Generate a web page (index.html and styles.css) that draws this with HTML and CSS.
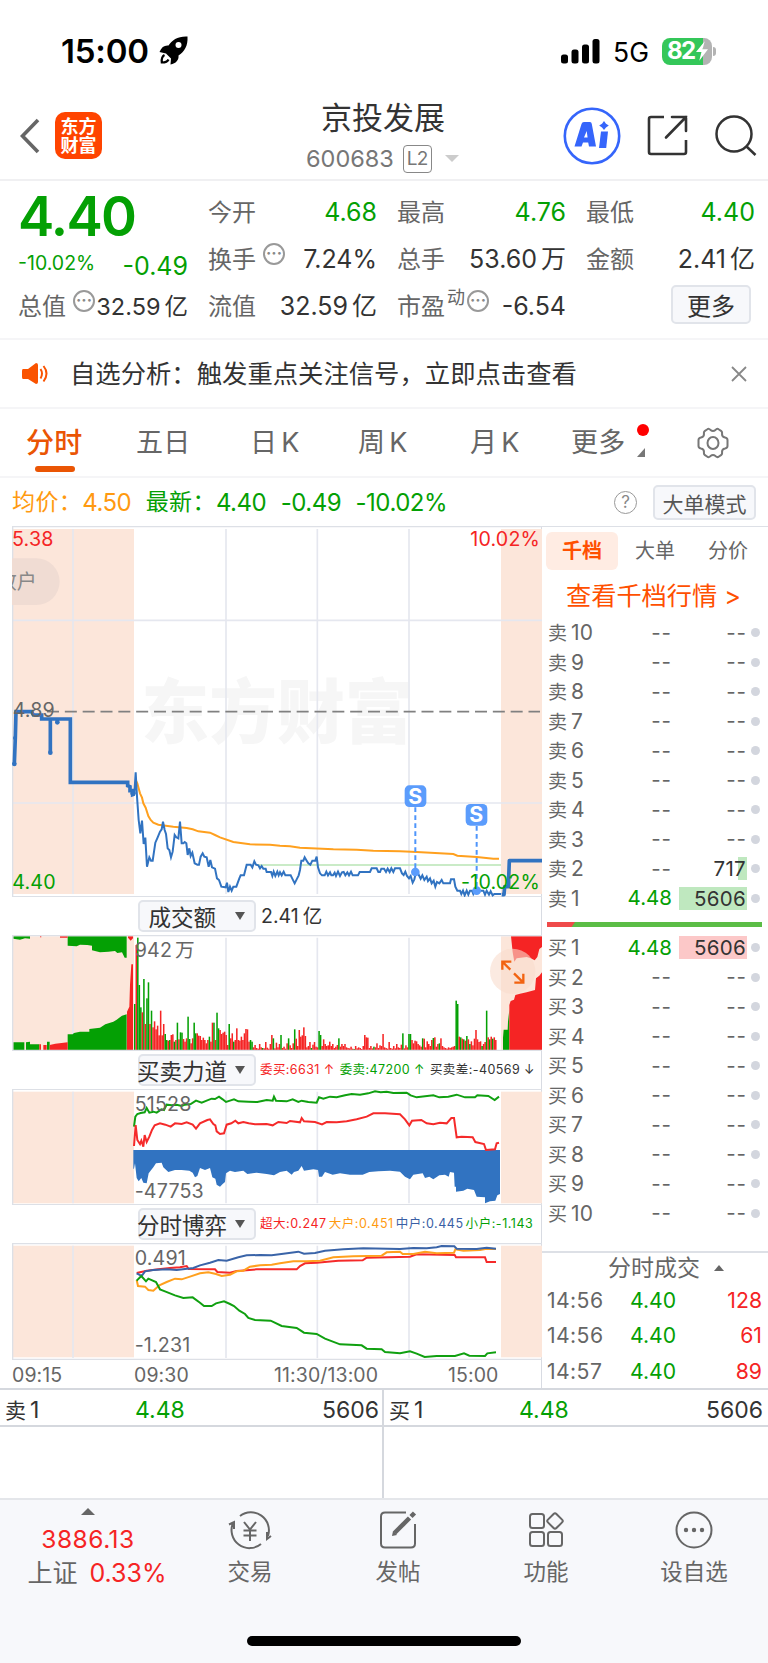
FILE: index.html
```html
<!DOCTYPE html>
<html lang="zh-CN">
<head>
    <meta charset="UTF-8">
    <meta name="viewport" content="width=device-width, initial-scale=1.0">
    <title>京投发展 600683</title>
    <link rel="stylesheet" href="styles.css">
</head>
<body>

    <!-- 状态栏 -->
    <div class="status-bar">
        <div class="status-time">15:00</div>
        <svg class="rocket" width="29" height="29" viewBox="0 0 29 29">
            <path d="M28.500 0.500C19 0 13 4 9.500 9.500C5.500 9 2.500 11 0.500 16L7 17.500L12 22.500L11.500 28.500C17 27.500 20 24 19.500 19.500C25.500 15.500 29 10 28.500 0.500Z"/>
            <circle cx="19.500" cy="9" r="3" fill="#fff"/>
            <path d="M5.500 19C2.500 20.500 2.500 23.500 2.800 26.500C6 26.500 8.500 26 9.500 23.500" fill="none" stroke="#000" stroke-width="2.200"/>
        </svg>
        <div class="status-right">
            <svg width="39" height="25" viewBox="0 0 39 25">
                <rect x="0" y="15.500" width="7" height="9" rx="2.500"/>
                <rect x="10.500" y="10.500" width="7" height="14" rx="2.500"/>
                <rect x="21" y="5.500" width="7" height="19" rx="2.500"/>
                <rect x="31.500" y="0" width="7" height="24.500" rx="2.500"/>
            </svg>
            <span class="network">5G</span>
            <div class="battery">
                <span>82</span>
                <svg width="12" height="20" viewBox="0 0 11 18"><path d="M8 0L0 10H5L3 18L11 7.500H6Z" fill="#fff"/></svg>
            </div>
            <i class="battery-tip"></i>
        </div>
    </div>

    <!-- 标题栏 -->
    <header class="header">
        <svg class="back" width="20" height="36" viewBox="0 0 20 36"><path d="M18 2L2.500 18L18 34" fill="none" stroke="#666" stroke-width="3.600"/></svg>
        <div class="logo">东方<br>财富</div>
        <div class="title">
            <h1>京投发展</h1>
            <div class="code">600683<span class="l2">L2</span><i class="arrow-down"></i></div>
        </div>
        <div class="header-icons">
            <svg width="58" height="58" viewBox="0 0 58 58">
                <circle cx="29" cy="29" r="27.200" fill="none" stroke="#3565fb" stroke-width="2.600"/>
                <path d="M11.500 39.500L18.500 17Q19 15 21 15H27Q28.500 15 28.800 17L33 39.500H26L25.200 35.500H20L18.500 39.500ZM21 30.500H24.600L23.700 24Z" fill="#3565fb" fill-rule="evenodd"/>
                <path d="M38 24.500H45L43.200 41H36Z" fill="#3565fb"/>
                <path d="M41 14L43 16.800L45.800 18.500L43 20.400L41 23L39 20.400L36.200 18.500L39 16.800Z" fill="#3565fb"/>
            </svg>
            <svg class="share" width="41" height="41" viewBox="0 0 41 41" fill="none" stroke="#333" stroke-width="2.600">
                <path d="M17 2H4Q2 2 2 4V37Q2 39 4 39H37Q39 39 39 37V25"/>
                <path d="M25 2H39V16M39 2L19 22.500" stroke-linecap="round"/>
            </svg>
            <svg class="search" width="42" height="42" viewBox="0 0 42 42" fill="none" stroke="#333" stroke-width="2.500">
                <circle cx="19" cy="19" r="17.500"/><path d="M31 31L40.500 40"/>
            </svg>
        </div>
    </header>

    <!-- 行情 -->
    <section class="quote">
        <div class="price">4.40</div>
        <div class="cell"><span>今开</span><b class="green">4.68</b></div>
        <div class="cell"><span>最高</span><b class="green">4.76</b></div>
        <div class="cell"><span>最低</span><b class="green">4.40</b></div>

        <div class="cell change"><b class="green small">-10.02%</b><b class="green">-0.49</b></div>
        <div class="cell"><span>换手<i class="tip">···</i></span><b>7.24%</b></div>
        <div class="cell"><span>总手</span><b>53.60<em>万</em></b></div>
        <div class="cell"><span>金额</span><b>2.41<em>亿</em></b></div>

        <div class="cell total"><span>总值<i class="tip">···</i></span><b>32.59<em>亿</em></b></div>
        <div class="cell"><span>流值</span><b>32.59<em>亿</em></b></div>
        <div class="cell"><span>市盈<sup>动</sup><i class="tip near">···</i></span><b>-6.54</b></div>
        <div class="cell"><button class="more-btn">更多</button></div>
    </section>

    <!-- 提示 -->
    <div class="notice">
        <svg width="27" height="24" viewBox="0 0 27 24">
            <path d="M1 7H6L14 1Q16 1 16 3V20Q16 22 14 22L6 17H1Q0 17 0 15V9Q0 7 1 7Z" fill="#fa5300"/>
            <path d="M18.500 7Q21.500 11.500 18.500 16.500M21.500 4Q27.500 11.500 21.500 19.500" fill="none" stroke="#fa5300" stroke-width="2"/>
        </svg>
        <p>自选分析：触发重点关注信号，立即点击查看</p>
        <svg class="close" width="16" height="16" viewBox="0 0 16 16"><path d="M1 1L15 15M15 1L1 15" stroke="#888" stroke-width="1.800"/></svg>
    </div>

    <!-- 周期 -->
    <nav class="tabs">
        <a class="active">分时</a>
        <a>五日</a>
        <a>日<em>K</em></a>
        <a>周<em>K</em></a>
        <a>月<em>K</em></a>
        <a class="more">更多<i class="dot"></i><i class="corner"></i></a>
        <svg width="34" height="32" viewBox="0 0 34 32" fill="none" stroke="#777" stroke-width="2">
            <path d="M11 2.500Q13 1 14.500 3Q17 5 19.500 3Q21 1 23 2.500L25 3.800Q26.500 5 26 7Q26 10 29 10.500Q31.500 11 31.500 13V19Q31.500 21 29 21.500Q26 22 26 25Q26.500 27 25 28.200L23 29.500Q21 31 19.500 29Q17 27 14.500 29Q13 31 11 29.500L9 28.200Q7.500 27 8 25Q8 22 5 21.500Q2.500 21 2.500 19V13Q2.500 11 5 10.500Q8 10 8 7Q7.500 5 9 3.800Z"/>
            <ellipse cx="17" cy="16" rx="5.500" ry="6"/>
        </svg>
    </nav>

    <!-- 均价 -->
    <div class="avg-row">
        <span class="orange">均价：</span><b class="orange">4.50</b>
        <span class="green">最新：</span><b class="green">4.40</b><b class="green">-0.49</b><b class="green">-10.02%</b>
        <i class="help">?</i>
        <button class="mode-btn">大单模式</button>
    </div>

    <main class="main">
        <div class="charts">
            <!-- 价格 -->
            <svg class="chart price-chart" viewBox="36 18 1590 1113">
                <rect class="auction" x="37" y="27" width="365" height="1095"/>
                <rect class="auction" x="1503" y="27" width="123" height="1095"/>
                <text class="watermark" x="424" y="655" textLength="814" lengthAdjust="spacingAndGlyphs">东方财富</text>
                <path class="grid" d="M219 27V1122M678 27V1122M952 27V1122M1227 27V1122M37 301H1626M37 849H1626"/>
                <path class="frame" d="M36 20H1626M38 18V1131M36 1130H1626"/>
                <rect x="-60" y="115" width="239" height="140" rx="70" fill="#f0dcd3"/>
                <text class="pill-text" x="-10" y="207">散户</text>
                <path d="M141 575H1620" stroke="#808080" stroke-width="5" stroke-dasharray="36 17.500"/>
                <path d="M770 1035H1503" stroke="#b9e5b5" stroke-width="5"/>
                <path class="line" stroke="#ffa01e" d="M407 780L412 790L420 820L426 833L430 850L437 863L445 888L452 900L460 908L475 914L520 920L560 924L578 928L595 934L630 938L645 945L660 952L700 966L750 973L810 974L840 977L870 979L900 983L1000 988L1070 989L1120 992L1200 994L1250 996L1360 1002L1372 1007L1430 1011L1480 1016L1497 1016"/>
                <path class="line thick" d="M43 732L46 652L48 575H95L100 585H125V597H151V697V597H172V607V597H211V787H383V797L390 800V812L398 812V824L403 822"/>
                <g fill="#3173c1"><circle cx="43" cy="732" r="7"/><circle cx="45" cy="654" r="6"/><circle cx="151" cy="698" r="7"/><circle cx="172" cy="607" r="7"/><circle cx="399" cy="820" r="8"/></g>
                <path class="line" d="M403 822L407 757L411 830L416 900L421 940L426 902L431 972L436 953L441 1040L448 1012L453 1022H458L466 968L473 952L480 935L485 928L489 905L494 930L498 942L503 985L508 990L513 1012L518 995L524 945L529 952L535 955L540 905L545 970L550 970L554 966L559 970L563 1005L568 985L572 1008L577 998L584 1030L592 1034H597L602 1010L608 1000L613 1010L620 1012L626 1040L631 1020L636 1042L645 1046L651 1075L657 1080L664 1100L677 1102L681 1088L685 1116L690 1100L695 1112L700 1100L709 1100L718 1075L722 1066L732 1066L740 1034L752 1034L757 1042L763 1024L768 1034L775 1036L780 1045L785 1038L790 1046H797L800 1056H813L817 1068L821 1055L826 1068L832 1055L836 1066L840 1057L845 1066L851 1055L856 1066H872L878 1078L884 1090L890 1078L896 1066L900 1050L904 1022L910 1022L914 1012L920 1022L925 1030L931 1034L937 1022H946L950 1010L954 1042L960 1060L966 1066H974L979 1055L984 1066L990 1057L994 1066H999L1004 1058L1008 1068L1014 1055L1020 1068L1026 1057L1031 1056L1036 1066L1042 1057L1047 1066L1053 1055L1058 1066H1074L1079 1056H1110L1115 1045H1130L1135 1056H1140L1144 1046H1152L1158 1056L1163 1046L1169 1056L1174 1045L1180 1056L1185 1045H1200L1206 1060L1211 1065L1216 1055L1221 1068L1227 1075L1232 1068L1238 1088L1243 1078L1248 1057L1255 1062L1262 1076L1267 1066L1273 1080L1280 1070L1284 1083L1290 1075L1295 1090L1301 1082L1306 1100L1311 1086L1318 1090L1325 1080L1330 1090H1350L1353 1078H1362L1366 1100L1372 1112H1380L1384 1122L1389 1112L1394 1126L1400 1112L1405 1124L1410 1112H1416L1420 1122L1425 1112H1450L1455 1124L1460 1112L1467 1124L1472 1114L1478 1126L1483 1122H1503"/>
                <path class="line thick" stroke-linejoin="round" d="M1505 1124H1512L1514 1100H1526V1075L1528 1022H1626"/>
                <g stroke="#4e95fb" stroke-width="6" stroke-dasharray="14 10"><path d="M1246 862V1050M1430 918V1110"/></g>
                <g fill="#5b9cfc"><rect x="1214" y="796" width="65" height="65" rx="14"/><rect x="1397" y="852" width="65" height="65" rx="14"/><circle cx="1246" cy="1056" r="13"/><circle cx="1430" cy="1112" r="13"/></g>
                <text class="mark" x="1246" y="851">S</text>
                <text class="mark" x="1429" y="907">S</text>
                <text class="label up" x="36" y="77">5.38</text>
                <text class="label up end" x="1620" y="77">10.02%</text>
                <text class="label" x="38" y="592">4.89</text>
                <text class="label down" x="37" y="1108">4.40</text>
                <text class="label down end" x="1620" y="1108">-10.02%</text>
            </svg>

            <div class="toolbar">
                <button>成交额<i></i></button>
                <span class="amount">2.41<em>亿</em></span>
            </div>

            <!-- 成交额 -->
            <svg class="chart" viewBox="36 120 1590 348">
                <rect class="auction" x="37" y="124" width="365" height="342"/>
                <rect class="auction" x="1503" y="124" width="123" height="342"/>
                <path class="grid" d="M219 128V466M678 128V466M952 128V466M1227 128V466"/>
                <g fill="#04a004">
                    <path d="M40 466V442H73V466ZM78 466V442L90 440V448H118V466ZM141 466V440H149V466ZM203 466V418H218L222 414L240 410L268 410V402L300 398L316 388L340 380L350 374L366 362L380 358V466Z"/>
                    <path d="M40 124V131L60 134L75 130L90 131V124ZM203 124V152L230 154L240 149L262 150L276 152V166L300 172L325 170L345 168L352 174L366 172L374 188H380V124Z"/>
                    <path d="M1509 466V428L1511 404H1523L1524 380L1528 345V466Z"/>
                </g>
                <g fill="#f52424">
                    <path d="M118 466V448H123V466ZM130 466V450H140V466ZM149 466V450L166 446L203 442V466ZM381 466V350L388 335L390 270L394 208H399V466Z"/>
                    <path d="M120 124H124V127H120ZM180 124H203V128H180ZM384 124V128L392 137L399 130V124Z"/>
                    <path d="M1528 466V330L1532 318L1542 314L1546 300L1560 296L1580 292L1605 285L1608 250L1618 242L1626 232V466Z"/>
                    <path d="M1533 124H1626V156L1618 162L1612 186L1604 196L1592 190L1580 186L1550 190L1543 200L1538 172Z"/>
                </g>
                <g id="volumeBars"></g>
                <path class="frame" d="M36 122H1626M38 120V468M36 466H1626"/>
                <circle cx="1538" cy="229" r="68" fill="#f9dccd" fill-opacity=".6"/>
                <path d="M1507 224V200H1534M1507 200L1531 224M1543 263H1570V236M1570 263L1542 235" fill="none" stroke="#f26311" stroke-width="7"/>
                <text class="label" x="404" y="187">942<tspan dx="9">万</tspan></text>
            </svg>

            <div class="toolbar">
                <button>买卖力道<i></i></button>
                <div class="legend"><span class="red">委买:6631 ↑</span><span class="green">委卖:47200 ↑</span><span>买卖差:-40569 ↓</span></div>
            </div>

            <!-- 买卖力道 -->
            <svg class="chart" viewBox="36 27 1590 348">
                <rect class="auction" x="37" y="35" width="365" height="335"/>
                <rect class="auction" x="1503" y="35" width="123" height="335"/>
                <path class="grid" d="M219 35V370M678 35V370M952 35V370M1227 35V370"/>
                <path class="frame" d="M36 28H1626M38 27V375M36 374H1626"/>
                <path fill="#3173c1" d="M400 210H1500V342L1492 346L1486 362L1470 364L1455 370V352L1430 350L1422 330L1402 326L1390 332L1368 335V320H1364L1362 278L1350 276L1346 290L1335 284L1318 286L1300 298L1288 290L1275 294L1268 280L1240 284L1230 298L1215 290L1200 275L1170 272L1135 274L1108 276L1088 284L1050 284L1020 280L998 284L975 276L966 290H957L954 270L940 268L912 272L905 258L895 272L882 276L875 284L860 272L840 276L822 286L800 282L770 278L742 282L730 272L705 276L690 272L678 280L675 306L668 312L660 320L650 314L646 296L637 292L630 264L615 270L600 264L592 288L585 292L578 278L568 272L545 270L525 270L505 276L490 262L485 248L468 250L460 262L446 280L440 310L430 308L424 294L416 304L410 294L405 250L402 266H400Z"/>
                <path class="line" stroke="#10a010" d="M402 140L406 110L412 102L422 99L434 97L440 84L448 98L460 95L470 98L484 88L492 90L500 74L515 76L530 74L545 78L555 74L572 72L588 62L605 68L620 62L635 56L645 57L657 50L668 58L678 66L690 62L702 58L715 64L745 65L772 66L800 60L818 62L822 50L828 62L860 64L878 58L895 66L905 62L925 66L950 68L957 52L970 56L990 50L1010 52L1035 46L1055 42L1080 44L1105 40L1125 34L1142 37L1160 35L1180 39L1220 38L1232 46L1250 52L1300 46L1318 52L1345 50L1370 44L1395 52L1425 52L1432 46L1465 48L1484 60L1497 50"/>
                <path class="line" stroke="#f52a2a" d="M402 198L407 135L412 180L420 192L424 182L430 200L434 165L440 186L448 170L456 150L464 136L480 130L496 134L512 140L525 130L545 132L560 127L578 134L588 146L600 130L622 120L630 118L640 132L646 136L650 154L660 162L672 160L680 134L694 130L706 122L715 130L730 126L746 130L765 133L800 132L818 136L835 126L860 129L870 123L900 127L905 114L912 124L945 126L966 133L980 126L1010 127L1040 124L1070 118L1100 110L1120 100L1155 100L1200 103L1215 118L1228 136L1236 122L1264 120L1280 130L1300 133L1320 128L1340 130L1354 114H1362L1370 172L1385 170L1418 172L1426 186L1452 192L1458 210L1485 208L1490 190L1497 188"/>
                <text class="label" x="404" y="93">51528</text>
                <text class="label" x="404" y="353">-47753</text>
            </svg>

            <div class="toolbar">
                <button>分时博弈<i></i></button>
                <div class="legend tight"><span class="red">超大:0.247</span><span class="orange">大户:0.451</span><span class="blue">中户:0.445</span><span class="green">小户:-1.143</span></div>
            </div>

            <!-- 分时博弈 -->
            <svg class="chart last" viewBox="36 489 1590 351">
                <rect class="auction" x="37" y="497" width="365" height="335"/>
                <rect class="auction" x="1503" y="497" width="123" height="335"/>
                <path class="grid" d="M219 497V834M678 497V834M952 497V834M1227 497V834"/>
                <path class="frame" d="M36 491H1626M38 489V840M36 838H1626"/>
                <path class="line" stroke="#f52a2a" d="M410 579L440 572L475 568L510 564L540 562L560 558L566 567L645 568L652 576L690 578L710 573L770 568L890 568L900 558L915 550L950 548L1015 542L1088 541L1100 533L1230 530L1250 523L1364 525L1368 532H1455L1460 546H1488"/>
                <path class="line" stroke="#ffa01e" d="M410 600L414 618L435 620L445 630L460 632L478 616L500 606L525 596L545 598L570 590L600 580L625 577L648 582L665 588L690 584L710 574L730 572L750 560L780 556L815 554L840 550L880 544L920 544L960 542L1000 532L1060 529L1145 527L1160 517L1200 515L1208 522L1240 522L1275 515L1310 520L1362 518L1366 508L1390 512L1440 510L1460 506L1488 507"/>
                <path class="line" stroke="#3a64a8" d="M410 580L425 588L435 574L460 570L500 568L530 570L580 564L600 556L630 548L655 540L680 542L715 532L740 526L780 525L815 526L850 521L895 515L912 521L945 519L975 512L1030 508L1090 505L1200 507L1240 504L1280 505L1310 502L1325 498L1363 499L1370 506L1430 507L1460 503L1488 506"/>
                <path class="line" stroke="#10a010" d="M410 602L424 588L438 604L445 596L468 606L480 628L495 634L525 646L550 654L578 652L600 668L612 678L635 678L648 670L672 664L690 672L702 678L718 692L735 702L745 714L765 720L812 722L845 738L890 744L912 758L950 762L975 776L1020 793L1085 796L1100 806L1145 808L1155 816L1200 820L1230 814L1250 821L1274 831L1310 828L1365 828L1392 820L1408 827L1455 828L1462 820L1488 817"/>
                <text class="label" x="404" y="555">0.491</text>
                <text class="label" x="404" y="815">-1.231</text>
            </svg>

            <div class="axis"><span>09:15</span><span>09:30</span><span>11:30/13:00</span><span>15:00</span></div>
        </div>

        <!-- 盘口 -->
        <aside class="book">
            <div class="book-tabs"><a class="active">千档</a><a>大单</a><a>分价</a></div>
            <a class="book-link">查看千档行情 &gt;</a>
            <div id="sellRows"></div>
            <div class="ratio"><i></i></div>
            <div id="buyRows"></div>
            <div class="deals">
                <div class="deals-title">分时成交<i></i></div>
                <div class="deal"><span>14:56</span><b class="green">4.40</b><b class="red">128</b></div>
                <div class="deal"><span>14:56</span><b class="green">4.40</b><b class="red">61</b></div>
                <div class="deal"><span>14:57</span><b class="green">4.40</b><b class="red">89</b></div>
            </div>
        </aside>
    </main>

    <!-- 买卖一档 -->
    <div class="level-one">
        <div><span>卖<em>1</em></span><b class="green">4.48</b><b>5606</b></div>
        <div><span>买<em>1</em></span><b class="green">4.48</b><b>5606</b></div>
    </div>
    <div class="empty-row"><div></div><div></div></div>

    <!-- 底部导航 -->
    <footer class="footer">
        <div class="footer-nav">
            <div class="index">
                <i></i>
                <b>3886.13</b>
                <div><span>上证</span><b>0.33%</b></div>
            </div>
            <a>
                <svg width="44" height="40" viewBox="0 0 44 40" fill="none" stroke="#666" stroke-width="2">
                    <path d="M12 6A18 18 0 0 1 40 26M33 34A18 18 0 0 1 5 13M1 14.500L6 12V19M43 26L39 29V22"/>
                    <path d="M16 12L22 19.500L28 12M22 19.500V31M15.500 20.500H28.500M15.500 25.500H28.500"/>
                </svg>
                交易
            </a>
            <a>
                <svg width="40" height="40" viewBox="0 0 40 40" fill="none" stroke="#666" stroke-width="2">
                    <path d="M28 2.500H7Q3 2.500 3 6.500V33.500Q3 37.500 7 37.500H33Q37 37.500 37 33.500V14"/>
                    <path d="M16.500 23L31.500 8" stroke-width="4.500"/><path d="M33 6.500L36.500 3" stroke-width="4.500"/><path d="M14 26L15 21L19 25Z" fill="#666" stroke="none"/>
                </svg>
                发帖
            </a>
            <a>
                <svg width="40" height="40" viewBox="0 0 40 40" fill="none" stroke="#666" stroke-width="2">
                    <rect x="4" y="4" width="14" height="14" rx="2.500"/><rect x="4" y="22" width="14" height="14" rx="2.500"/><rect x="22" y="22" width="14" height="14" rx="2.500"/>
                    <rect x="23" y="5" width="12" height="12" rx="2" transform="rotate(45 29 11)"/>
                </svg>
                功能
            </a>
            <a>
                <svg width="40" height="40" viewBox="0 0 40 40" fill="none" stroke="#666" stroke-width="2">
                    <circle cx="20" cy="20" r="17.500"/>
                    <g fill="#666" stroke="none"><circle cx="12" cy="20" r="2.200"/><circle cx="20" cy="20" r="2.200"/><circle cx="28" cy="20" r="2.200"/></g>
                </svg>
                设自选
            </a>
        </div>
        <div class="home-bar"></div>
    </footer>

    <script src="script.js"></script>
</body>
</html>
```
FILE: styles.css
```css
* {
    box-sizing: border-box;
}

body {
    margin: 0;
    width: 768px;
    background: #fff;
    color: #333;
    font-family: Inter, "Noto Sans CJK SC", sans-serif;
    font-size: 24px;
    line-height: 1;
}

i, b, h1, em {
    font-style: normal;
    font-weight: normal;
}

em {
    margin-left: 4px;
}

button {
    font-family: inherit;
    color: #333;
    background: #f7f8fb;
    border: 2px solid #e1e4ea;
    border-radius: 5px;
    padding: 0;
}

a {
    color: #666;
}

.green { color: #04a004; }
.red { color: #f52424; }
.orange { color: #ff9a10; }
.blue { color: #3a5fa5; }

/* 状态栏 */
.status-bar {
    height: 95px;
    padding: 7px 52px 0 61px;
    display: flex;
    align-items: center;
    color: #000;
}

.status-time {
    font-size: 33px;
    font-weight: 600;
    width: 98px;
    letter-spacing: -.2px;
}

.rocket {
    margin-top: -1px;
}

.status-right {
    margin-left: auto;
    display: flex;
    align-items: center;
}

.network {
    font-size: 26.500px;
    margin: 2px 13px 0 13px;
}

.battery {
    width: 50px;
    height: 27px;
    border-radius: 8px;
    background: linear-gradient(to right, #34c759 41px, #b3b3b3 41px);
    color: #fff;
    font-size: 24px;
    font-weight: 700;
    display: flex;
    align-items: center;
    padding-left: 5px;
    letter-spacing: -1.5px;
}

.battery svg {
    margin-left: 1px;
}

.battery-tip {
    width: 3px;
    height: 9px;
    margin-left: 1px;
    border-radius: 0 3px 3px 0;
    background: #b3b3b3;
}

/* 标题栏 */
.header {
    height: 86px;
    padding: 0 11px 3px 20px;
    display: flex;
    align-items: center;
    border-bottom: 2px solid #f0f0f2;
}

.logo {
    width: 47px;
    height: 47px;
    margin-left: 15px;
    border-radius: 10px;
    background: #ff4400;
    color: #fff;
    font-size: 18px;
    font-weight: 700;
    line-height: 19px;
    padding-top: 5px;
    text-align: center;
}

.title {
    margin-left: 204px;
    width: 155px;
}

.title h1 {
    margin: 10px 0 0 15px;
    font-size: 31px;
    line-height: 36px;
    white-space: nowrap;
}

.code {
    height: 46px;
    display: flex;
    align-items: center;
    color: #777;
    font-size: 23.500px;
}

.l2 {
    margin-left: 9px;
    padding: 0 3px;
    border: 1.5px solid #888;
    border-radius: 4px;
    font-size: 19px;
    line-height: 26px;
    letter-spacing: -.8px;
}

.arrow-down {
    margin-left: 13px;
    border: 7px solid transparent;
    border-top-color: #ccc;
    border-bottom: 0;
}

.header-icons {
    margin-left: auto;
    display: flex;
    align-items: center;
}

.share {
    margin-left: 26px;
}

.search {
    margin-left: 27px;
}

/* 行情 */
.quote {
    height: 159px;
    padding: 8px 0 0 18px;
    display: grid;
    grid-template-columns: 170px repeat(3, 169px);
    grid-auto-rows: 47px;
    column-gap: 20px;
    border-bottom: 2px solid #f5f5f7;
}

.price {
    color: #04a004;
    font-size: 54.500px;
    font-weight: 600;
    letter-spacing: -1.700px;
    line-height: 54px;
}

.cell {
    display: flex;
    align-items: center;
    justify-content: space-between;
    white-space: nowrap;
}

.cell span {
    color: #666;
    display: flex;
    align-items: center;
}

.cell b {
    font-size: 25px;
}

.cell .small {
    font-size: 19.500px;
}

.change {
    padding-top: 14px;
}

.change .small {
    margin-top: -6px;
}

.total b {
    font-size: 23.500px;
}

.tip {
    width: 22px;
    height: 22px;
    margin: -11px 0 0 7px;
    border: 2px solid #999;
    border-radius: 50%;
    color: #888;
    font-size: 16px;
    font-weight: 700;
    line-height: 17px;
    text-align: center;
}

.tip.near {
    margin-left: 2px;
}

.cell sup {
    font-size: 18px;
    line-height: 18px;
    margin-top: -17px;
    margin-left: 2px;
}

.more-btn {
    width: 80px;
    height: 39px;
    margin: -4px 0 0 85px;
    font-size: 24px;
}

/* 提示 */
.notice {
    height: 69px;
    padding: 0 21px 0 22px;
    display: flex;
    align-items: center;
    border-bottom: 2px solid #f5f5f7;
}

.notice p {
    margin: 0 0 0 21px;
    font-size: 25.350px;
    white-space: nowrap;
}

.close {
    margin-left: auto;
}

/* 周期 */
.tabs {
    height: 69px;
    padding-left: 26px;
    display: grid;
    grid-template-columns: 110px 114px 108px 112px 101px 125px 34px;
    align-items: center;
    border-bottom: 2px solid #f5f5f7;
    font-size: 27px;
}

.tabs a {
    letter-spacing: .3px;
}

.tabs .active {
    position: relative;
    color: #ea5504;
    font-size: 28px;
    font-weight: 500;
}

.tabs .active::after {
    content: "";
    position: absolute;
    left: 9px;
    top: 37px;
    width: 40px;
    height: 6px;
    border-radius: 3px;
    background: #ea5504;
}

.tabs .more {
    position: relative;
}

.dot {
    position: absolute;
    left: 66px;
    top: -5px;
    width: 12px;
    height: 12px;
    border-radius: 50%;
    background: #f00;
}

.corner {
    position: absolute;
    left: 66px;
    top: 19px;
    border-left: 8px solid transparent;
    border-bottom: 9px solid #777;
}

/* 均价 */
.avg-row {
    height: 48px;
    padding: 1px 12px 0 12px;
    display: flex;
    align-items: center;
    font-size: 23px;
    white-space: nowrap;
}

.avg-row span {
    letter-spacing: .4px;
}

.avg-row b {
    font-size: 24px;
    margin-right: 14.500px;
    letter-spacing: -.5px;
}

.help {
    width: 23px;
    height: 23px;
    margin-left: auto;
    border: 1.5px solid #999;
    border-radius: 50%;
    color: #888;
    font-size: 17px;
    line-height: 20px;
    text-align: center;
}

.mode-btn {
    width: 103px;
    height: 35px;
    margin-left: 16px;
    font-size: 21px;
    color: #555;
}

/* 图表 */
.main {
    display: flex;
    height: 862px;
}

.charts {
    width: 542px;
    padding-left: 12px;
    border-right: 1px solid #d8dbe2;
}

.chart {
    display: block;
    width: 530px;
    height: 116px;
}

.price-chart {
    height: 371px;
}

.chart.last {
    height: 117px;
}

.auction { fill: #fce6da; }
.grid { fill: none; stroke: #e5e7ef; stroke-width: 5; }
.frame { fill: none; stroke: #dde0e6; stroke-width: 4; }
.line { fill: none; stroke-width: 6; }
.line:not([stroke]) { stroke: #3173c1; }
.line.thick { stroke: #3173c1; stroke-width: 11; }
.label { fill: #666; font-size: 59px; letter-spacing: .5px; }
.label.up { fill: #f52424; }
.label.down { fill: #04a004; }
.label.end { text-anchor: end; }
.pill-text { fill: #888; font-size: 60px; }
.watermark { fill: #f6f6f6; font-size: 210px; font-weight: 900; }
.mark { fill: #fff; font-size: 64px; font-weight: 700; text-anchor: middle; }

.toolbar {
    height: 38px;
    padding-left: 126px;
    display: flex;
    align-items: center;
}

.toolbar button {
    flex: none;
    width: 118px;
    height: 32px;
    padding: 0 9px 1px 0;
    display: flex;
    align-items: center;
    justify-content: flex-end;
    font-size: 22.500px;
    white-space: nowrap;
}

.toolbar button i {
    margin-left: 8px;
    border: 5px solid transparent;
    border-top: 8px solid #555;
    border-bottom: 0;
}

.toolbar:nth-child(2) button i {
    margin-left: 19px;
}

.amount {
    margin-left: 5px;
    padding-top: 2px;
    font-size: 19.500px;
}

.legend {
    display: flex;
    gap: 5px;
    margin-left: 4px;
    padding-top: 1px;
    font-size: 12.500px;
    white-space: nowrap;
    letter-spacing: .42px;
}

.legend.tight {
    gap: 2px;
    letter-spacing: .55px;
}

.axis {
    height: 28px;
    padding-top: 6px;
    display: grid;
    grid-template-columns: 122px 140px 174px 60px;
    color: #666;
    font-size: 19.500px;
    letter-spacing: .1px;
}

/* 盘口 */
.book {
    flex: 1;
    border-top: 1px solid #dde0e6;
    font-size: 19px;
}

.book-tabs {
    display: flex;
    align-items: center;
    padding: 4px 0 0 4px;
    height: 43px;
    font-size: 20px;
}

.book-tabs a {
    width: 72px;
    line-height: 38px;
    margin-right: 1px;
    text-align: center;
}

.book-tabs .active {
    border-radius: 6px;
    background: #ffece3;
    color: #ff5000;
    font-weight: 700;
}

.book-link {
    display: block;
    height: 48px;
    padding-left: 24px;
    line-height: 53px;
    color: #ff5000;
    font-size: 25.200px;
    white-space: nowrap;
}

.row {
    display: grid;
    grid-template-columns: 73px 51px 75px 16px;
    align-items: center;
    height: 29.500px;
    padding-left: 6px;
    color: #666;
}

.row b {
    font-size: 20.500px;
    text-align: right;
}

.row span em {
    font-size: 21px;
    letter-spacing: .3px;
}

.row .volume {
    line-height: 23px;
    margin-left: 7px;
    padding-right: 1px;
    color: #333;
    letter-spacing: .3px;
}

.row .none {
    color: #666;
    letter-spacing: 1px;
}

.row .sell-fill { background: linear-gradient(to left, #bfe8bf var(--fill), transparent var(--fill)); }
.row .buy-fill { background: linear-gradient(to left, #fcc8c8 var(--fill), transparent var(--fill)); }

.row i {
    width: 9px;
    height: 9px;
    margin-left: 4px;
    border-radius: 50%;
    background: #d3d6de;
}

.ratio {
    height: 5px;
    margin: 9px 6px 6px 5px;
    background: #5bbd46;
}

.ratio i {
    display: block;
    width: 28px;
    height: 5px;
    background: #ef4a4a;
    clip-path: polygon(0 0, 100% 0, 88% 100%, 0 100%);
}

.deals {
    margin-top: 23px;
    border-top: 2px solid #dde0e6;
}

.deals-title {
    display: flex;
    align-items: center;
    height: 30px;
    padding-left: 66px;
    color: #666;
    font-size: 23px;
}

.deals-title i {
    margin-left: 14px;
    border: 5px solid transparent;
    border-top: 0;
    border-bottom: 6px solid #666;
}

.deal {
    display: grid;
    grid-template-columns: 83px 52px 1fr;
    align-items: center;
    height: 35.300px;
    padding: 0 6px 0 5px;
    font-size: 21.200px;
}

.deal span {
    color: #666;
    letter-spacing: .4px;
}

.deal b:last-child {
    text-align: right;
}

/* 买卖一档 */
.level-one, .empty-row {
    display: grid;
    grid-template-columns: 384px 384px;
}

.level-one {
    height: 39px;
    border-top: 2px solid #d5d8de;
    border-bottom: 2px solid #d5d8de;
}

.level-one div {
    display: grid;
    grid-template-columns: 130px 60px 1fr;
    align-items: center;
    padding: 5px 3px 0 5px;
    font-size: 21px;
}

.level-one div:last-child {
    padding-right: 5px;
}

.level-one div:first-child, .empty-row div:first-child {
    border-right: 2px solid #d5d8de;
}

.level-one b, .level-one em {
    font-size: 23px;
}

.level-one b:last-child {
    text-align: right;
}

.empty-row {
    height: 71px;
}

/* 底部导航 */
.footer {
    height: 165px;
    border-top: 2px solid #e4e6ea;
    background: #f7f8fb;
}

.footer-nav {
    display: flex;
    height: 136px;
}

.footer-nav a {
    width: 148px;
    padding-top: 10px;
    display: flex;
    flex-direction: column;
    align-items: center;
    font-size: 22.500px;
    line-height: 44px;
}

.index {
    width: 176px;
    display: flex;
    flex-direction: column;
    align-items: center;
    color: #f52424;
}

.index > i {
    margin-top: 8px;
    border: 7px solid transparent;
    border-top: 0;
    border-bottom: 7px solid #666;
}

.index > b {
    margin-top: 12px;
    font-size: 24.500px;
    letter-spacing: .5px;
}

.index div {
    display: flex;
    gap: 12px;
    margin-top: 9px;
    margin-left: 18px;
}

.index div b {
    font-size: 25px;
}

.index span {
    color: #666;
    font-size: 25px;
}

.home-bar {
    width: 274px;
    height: 10px;
    margin: 0 auto;
    border-radius: 5px;
    background: #000;
}
```
FILE: script.js
```js
// 每分钟成交额，负数为绿柱
const volumes = [
    -138, 315, -337, -195, -128, 113, -213, 78, -155, -203, 78, -118, 68, 86, 62, 73, 44, 118, 44, 78,
    -48, -30, 28, -30, 45, 47, -25, 30, -82, 32, -53, -52, 33, 25, 35, -100, -33, 20, 35, -82,
    -50, 50, 43, 42, 30, 37, 30, 20, 30, -40, 25, 82, -82, 30, -112, -65, 60, 48, 52, 55,
    45, 15, -78, 35, 50, -25, 30, 65, 30, 28, 40, 30, 50, 63, 62, 25, -30, -25, 8, 15,
    6, 4, 18, 8, -6, 5, 24, 7, 4, 18, 45, -35, 5, 22, 8, 18, -45, 6, 10, 4,
    20, -35, 14, 6, 20, -62, 34, 12, 60, 40, 44, 68, 42, 8, 12, 24, -6, 16, 24, 10,
    8, -57, -45, 12, 32, 18, 12, 14, 25, 12, 18, 6, 10, 15, -35, 10, 18, 12, 18, 8,
    6, 5, 10, 4, -3, 12, 5, 8, 6, 3, 12, 45, 38, 37, 6, 12, 5, -10, 8, 20,
    6, 14, 12, 48, 8, 6, 4, 24, 6, 4, 12, 5, 18, 8, 6, 16, -50, 5, 14, 8,
    -48, -48, 30, 20, 28, 26, 18, 14, 10, -35, 34, 8, 26, 18, 12, 30, -36, 38, 10, 18,
    -20, 35, 12, 8, 6, 4, 8, 6, 8, 10, 12, -148, -138, 40, -38, 34, -32, 28, -42, 32,
    -18, 26, 14, 34, 60, 32, 24, 26, -12, 18, 24, -118, 38, -32, 40, -34, 38, 30
];

const bars = document.getElementById('volumeBars');
volumes.forEach((v, i) => {
    const bar = document.createElementNS('http://www.w3.org/2000/svg', 'rect');
    const height = Math.abs(v);
    bar.setAttribute('x', 402 + i * 4.57);
    bar.setAttribute('y', 465 - height);
    bar.setAttribute('width', 4.6);
    bar.setAttribute('height', height);
    bar.setAttribute('fill', v < 0 ? '#04a004' : '#f52424');
    bars.appendChild(bar);
});

// 买卖盘十档
function addRow(box, name, price, volume, fill, type) {
    const row = document.createElement('div');
    row.className = 'row';
    row.innerHTML = `
        <span>${name[0]}<em>${name.slice(1)}</em></span>
        <b class="${price ? 'green' : 'none'}">${price || '--'}</b>
        <b class="${volume ? 'volume ' + type + '-fill' : 'none'}" style="--fill: ${fill}px">${volume || '--'}</b>
        <i></i>
    `;
    box.appendChild(row);
}

const sellRows = document.getElementById('sellRows');
const buyRows = document.getElementById('buyRows');
for (let i = 10; i >= 1; i--) {
    addRow(sellRows, '卖' + i, i === 1 ? '4.48' : '', { 1: '5606', 2: '717' }[i], { 1: 68, 2: 9 }[i] || 0, 'sell');
}
for (let i = 1; i <= 10; i++) {
    addRow(buyRows, '买' + i, i === 1 ? '4.48' : '', i === 1 ? '5606' : '', i === 1 ? 68 : 0, 'buy');
}
```
